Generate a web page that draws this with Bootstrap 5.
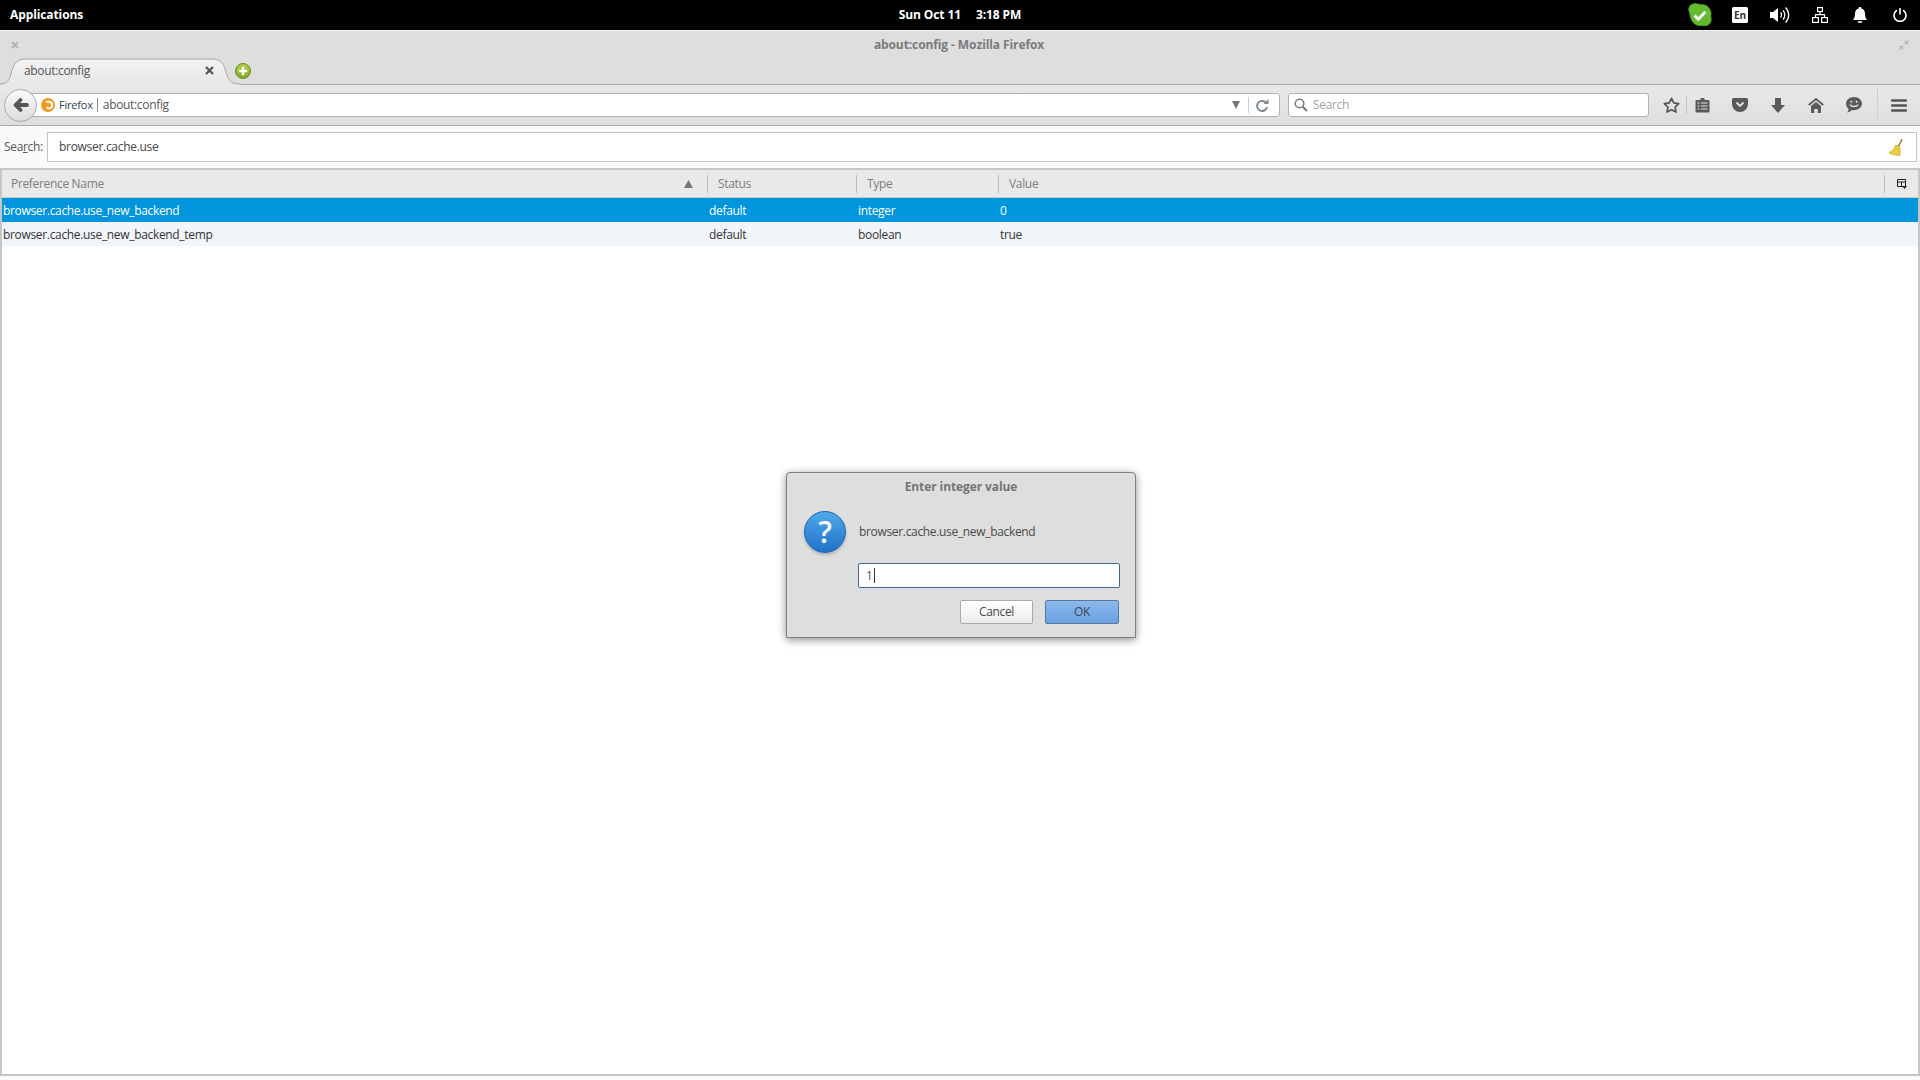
<!DOCTYPE html>
<html lang="en">
<head>
<meta charset="utf-8">
<title>about:config - Mozilla Firefox</title>
<link rel="stylesheet" href="https://cdn.jsdelivr.net/npm/bootstrap@5.3.0/dist/css/bootstrap.min.css">
<style>
html,body{height:100%;overflow:hidden}
body{font-family:"Open Sans","Noto Sans",sans-serif;font-size:12px;letter-spacing:-.33px;color:#3b3b3b;background:#fafafa;width:1920px;height:1080px;position:relative}
.shell{width:1920px;height:1080px}
.panel{height:30px;background:#000;color:#fff;font-weight:700;font-size:12px;letter-spacing:-.1px}
.panel-left{padding-left:10px;width:400px}
.panel-clock{gap:15px}
.panel-tray{width:400px}
.tray-slot{width:40px;height:30px}
.whiteline{height:1px;background:#f4f4f4}
.titlebar{height:54px;background:#dedede;position:relative;border-bottom:1px solid #a6a6a6}
.title-row{height:25px;padding:2px 11px 0}
.win-title{font-weight:700;color:#7b7b7b;font-size:12px;letter-spacing:-.1px}
.tab-row{height:28px;position:relative;padding-left:24px}
.tab-shape{position:absolute;left:0;top:0;width:240px;height:29px}
.tab-label{position:relative;width:175px;color:#555;font-size:12px;height:27px;line-height:27px}
.tab-close{position:relative;width:20px}
.tab-new{position:relative;margin-left:16px;margin-top:1px}
.toolbar{height:41px;background:linear-gradient(#e9e9e9,#dedede);border-bottom:1px solid #ababab;padding-left:4px;position:relative}
.backbtn{width:33px;height:33px;border-radius:50%;background:linear-gradient(#fbfbfb,#dcdcdc);border:1px solid #a9a9a9;position:relative;z-index:2;flex:none}
.urlbar{height:24px;width:1250px;margin-left:-7px;background:#fff;border:1px solid #b2b2b2;border-radius:0 3px 3px 0;padding-left:10px;flex:none;position:relative;z-index:1;color:#555}
.url-site{color:#2f3d4d;font-size:11px;margin-left:4px;padding-right:4px;border-right:1px solid #8c8c8c;line-height:14px;letter-spacing:-.2px}
.url-path{margin-left:5px;font-size:12px}
.url-tail{width:47px;height:22px;margin-left:auto}
.url-sep{width:1px;height:16px;background:#cfcfcf;margin:0 7px 0 8px}
.searchbar{width:361px;height:24px;margin-left:8px;background:#fff;border:1px solid #b2b2b2;border-radius:3px;padding-left:5px;color:#9ba3ad;font-size:12px;flex:none;gap:5px}
.tools{flex:1;position:relative}
.tool-sep{width:1px;height:18px;background:#c2c2c2}
.tool-sep2{width:1px;height:34px;background:#cfcfcf}
.tool-cell-a{width:37px;padding-left:7px}
.tool-cell-b{width:34px;padding-right:4px}
.tool-cell{width:38px}
.tool-sep-last{margin-left:4px}
.filter{height:42px;background:#fafafa;padding:6px 3px 0 4px;gap:5px}
.filter-label{width:38px;height:30px;line-height:30px;color:#555;font-size:12px}
.filter-input{flex:1;height:30px;background:#fff;border:1px solid #c4c4c4;padding:0 13px 0 11px;font-size:12px;letter-spacing:-.3px;color:#444}
.tree{height:908px;border:2px solid #c6c6c6;background:#fff}
.tree-head{height:28px;background:#e9e9e9;border-bottom:1px solid #c8c8c8;color:#7d7d7d;font-size:12px;display:grid;grid-template-columns:705px 149px 142px 886px 34px;align-items:center}
.th{height:18px;line-height:18px;padding-left:10px;border-left:1px solid #bdbdbd;position:relative}
.th:first-child{border-left:0;padding-left:9px}
.sort-arrow{position:absolute;right:14px;top:5px}
.tree-row{height:24px;display:grid;grid-template-columns:705px 149px 142px 1fr;align-items:center;font-size:12px;color:#333;padding-top:1px}
.tree-row>div{padding-left:2px}
.tree-row>div:first-child{padding-left:1px}
.tree-row.sel{background:#0095dd;color:#fff}
.tree-row.alt{background:#f2f5fa}
.dlg{position:absolute;left:786px;top:472px;width:350px;height:166px;background:#dedede;border:1px solid #7f7f7f;border-radius:4px 4px 0 0;box-shadow:0 2px 8px rgba(0,0,0,.45);padding:0 16px}
.dlg-title{height:26px;line-height:27px;text-align:center;font-weight:700;color:#757575;font-size:12px;letter-spacing:-.1px}
.dlg-body{gap:11px;margin-top:10px}
.dlg-icon{width:42px;height:42px;margin:2px 1px 0;border-radius:50%;background:linear-gradient(#4fa8ea,#2272c9);border:1px solid #1a66b5;color:#fff;font-size:30px;font-weight:600;line-height:1;box-shadow:0 2px 3px rgba(0,0,0,.2)}
.dlg-main{flex:1}
.dlg-msg{height:24px;line-height:24px;color:#4a4a4a;margin-top:11px;padding-left:1px}
.dlg-input{height:25px;border:1px solid #3f6a9c;border-radius:2px;background:#fff;margin-top:19px;padding-left:7px;line-height:23px;color:#555;width:262px}
.caret-bar{display:inline-block;width:1px;height:15px;background:#333;vertical-align:-3px;margin-left:1px}
.dlg-actions{gap:12px;margin-top:12px;padding-right:1px}
.dbtn{height:24px;font-size:12px;line-height:22px;border-radius:2px;text-align:center;color:#4a4a4a}
.dbtn-cancel{width:73px;background:linear-gradient(#fff,#ececec);border:1px solid #a9a9a9}
.dbtn-ok{width:74px;background:linear-gradient(#8cb8ec,#6aa2e2);border:1px solid #56789f;color:#3a4654}
</style>
</head>
<body>
<div class="shell d-flex flex-column">
  <div class="panel d-flex align-items-center justify-content-between">
    <div class="panel-left">Applications</div>
    <div class="panel-clock d-flex"><span>Sun Oct 11</span><span>3:18 PM</span></div>
    <div class="panel-tray d-flex justify-content-end">
      <div class="tray-slot d-flex align-items-center justify-content-center">
        <svg width="24" height="24" viewBox="0 0 24 24"><path d="M5 1c3-1.300 5 .5 7.500.5C16 1.500 19 2 21 5s2.500 5 1.800 7.500c.4 2.800 1 5.500-1 8-2 2.400-5 2.700-7.300 2-3 .4-5.500 0-8-1.800C4 18.500 2.700 16 2.300 13 2 10 .3 8 .8 5.500 1.200 3 3 1.500 5 1z" fill="#62bb2e" stroke="#4c9a20" stroke-width=".8"/><path d="M6.500 12.500l3.800 3.800 7.200-7.500" fill="none" stroke="#fff" stroke-width="2.800"/></svg>
      </div>
      <div class="tray-slot d-flex align-items-center justify-content-center">
        <svg width="16" height="16" viewBox="0 0 16 16"><rect width="16" height="16" rx="1.500" fill="#fff"/><text x="8" y="12" text-anchor="middle" font-family="Open Sans" font-size="10" fill="#333">En</text></svg>
      </div>
      <div class="tray-slot d-flex align-items-center justify-content-center">
        <svg width="20" height="18" viewBox="0 0 20 18"><path d="M0 6h3l5-4v14l-5-4H0z" fill="#fff"/><path d="M10.500 6.500a3.500 3.500 0 0 1 0 5M13 4.500a6.500 6.500 0 0 1 0 9M15.500 1.500a10.500 10.500 0 0 1 0 15" fill="none" stroke="#fff" stroke-width="1.300"/></svg>
      </div>
      <div class="tray-slot d-flex align-items-center justify-content-center">
        <svg width="16" height="16" viewBox="0 0 16 16" fill="none" stroke="#fff" stroke-width="1.200"><rect x="5.600" y=".6" width="4.800" height="4"/><rect x=".6" y="10.600" width="5.800" height="4.800"/><rect x="9.600" y="10.600" width="5.800" height="4.800"/><path d="M8 4.600v3M3.500 10.600V7.600h9v3"/></svg>
      </div>
      <div class="tray-slot d-flex align-items-center justify-content-center">
        <svg width="14" height="16" viewBox="0 0 14 16"><path d="M7 0c1 0 1.400.7 1.500 1.500C11 2.200 12 4.300 12 7c0 3 .8 4.500 2 6H0c1.200-1.500 2-3 2-6 0-2.700 1-4.800 3.500-5.500C5.600.7 6 0 7 0z" fill="#fff"/><path d="M4.500 14.300h5a2.500 1.700 0 0 1-5 0z" fill="#fff"/></svg>
      </div>
      <div class="tray-slot d-flex align-items-center justify-content-center">
        <svg width="14" height="14" viewBox="0 0 14 14" fill="none" stroke="#fff" stroke-width="1.600"><path d="M4 2.200a6 6 0 1 0 6 0"/><path d="M7 0v6.500"/></svg>
      </div>
    </div>
  </div>
  <div class="whiteline"></div>
  <div class="titlebar">
    <div class="title-row d-flex align-items-center justify-content-between">
      <svg width="8" height="8" viewBox="0 0 8 8"><path d="M1 1l6 6M7 1l-6 6" stroke="#b4b4b4" stroke-width="2"/></svg>
      <span class="win-title">about:config - Mozilla Firefox</span>
      <svg width="10" height="10" viewBox="0 0 10 10"><path d="M6 0v4h4zM4 10V6H0z" fill="#b0b0b0"/><path d="M5.500 4.500L10 0M4.500 5.500L0 10" stroke="#b0b0b0"/></svg>
    </div>
    <div class="tab-row d-flex align-items-center">
      <svg class="tab-shape" viewBox="0 0 240 29"><defs><linearGradient id="tabfill" x1="0" y1="0" x2="0" y2="1"><stop offset="0" stop-color="#f3f3f3"/><stop offset="1" stop-color="#e7e7e7"/></linearGradient></defs><path d="M0 28c7 0 9-3 11-10 2-9 5-15 15-15h186c9 0 12 5 14 13 2 8 5 12 14 12v1H0z" fill="url(#tabfill)"/><path d="M0 28c7 0 9-3 11-10 2-9 5-15 15-15h186c9 0 12 5 14 13 2 8 5 12 14 12" fill="none" stroke="#a6a6a6"/></svg>
      <div class="tab-label">about:config</div>
      <div class="tab-close d-flex justify-content-center"><svg width="9" height="9" viewBox="0 0 9 9"><path d="M1 1l7 7M8 1l-7 7" stroke="#555" stroke-width="2.200"/></svg></div>
      <svg class="tab-new" width="16" height="16" viewBox="0 0 16 16"><defs><linearGradient id="newfill" x1="0" y1="0" x2="0" y2="1"><stop offset="0" stop-color="#b5d34a"/><stop offset="1" stop-color="#7ea524"/></linearGradient></defs><circle cx="8" cy="8" r="7.500" fill="url(#newfill)" stroke="#688a1c"/><path d="M8 3.800v8.400M3.800 8h8.400" stroke="#fff" stroke-width="2.600"/></svg>
    </div>
  </div>
  <div class="toolbar d-flex align-items-center">
    <div class="backbtn d-flex align-items-center justify-content-center">
      <svg width="16" height="14" viewBox="0 0 16 14"><path d="M7.500 2L2.500 7l5 5M3.500 7h10.500" fill="none" stroke="#565656" stroke-width="3.800" stroke-linecap="round" stroke-linejoin="round"/></svg>
    </div>
    <div class="urlbar d-flex align-items-center">
      <svg width="14" height="14" viewBox="0 0 14 14"><circle cx="7" cy="7" r="7" fill="#f39a1c"/><path d="M4.800 3.800H8a3.300 3.300 0 0 1 .6 6.500 3 3 0 0 1-3-1.100" fill="none" stroke="#fff" stroke-width="1.900"/></svg>
      <span class="url-site">Firefox</span>
      <span class="url-path">about:config</span>
      <div class="url-tail d-flex align-items-center">
        <svg width="8" height="8" viewBox="0 0 8 8"><path d="M0 0h8L4 8z" fill="#777"/></svg>
        <div class="url-sep"></div>
        <svg width="13" height="13" viewBox="0 0 13 13"><path d="M10.500 4.500A5 5 0 1 0 11 8" fill="none" stroke="#7d8a96" stroke-width="2"/><path d="M7.500 5h5V0z" fill="#7d8a96"/></svg>
      </div>
    </div>
    <div class="searchbar d-flex align-items-center">
      <svg width="14" height="14" viewBox="0 0 14 14"><circle cx="5.500" cy="5.500" r="4.300" fill="none" stroke="#7a7a7a" stroke-width="1.500"/><path d="M8.700 8.700L13 13" stroke="#7a7a7a" stroke-width="2"/></svg>
      <span>Search</span>
    </div>
    <div class="tools d-flex align-items-center">
      <div class="d-flex justify-content-center tool-cell-a"><svg width="17" height="16" viewBox="0 0 17 16"><path d="M8.500 1.300l2.200 4.600 5 .7-3.600 3.500.9 5-4.500-2.400-4.500 2.400.9-5L1.300 6.600l5-.7z" fill="none" stroke="#555" stroke-width="1.700" stroke-linejoin="round"/></svg></div>
      <div class="tool-sep"></div>
      <div class="d-flex justify-content-center tool-cell-b"><svg width="15" height="16" viewBox="0 0 15 16"><path d="M1.500 3h3.500l1-2h3l1 2h3.500a1 1 0 0 1 1 1v10.500a1 1 0 0 1-1 1h-12a1 1 0 0 1-1-1V4a1 1 0 0 1 1-1z" fill="#5a5a5a"/><path d="M2.500 6h2M6 6h6.500M2.500 9h2M6 9h6.500M2.500 12h2M6 12h6.500" stroke="#e6e6e6" stroke-width="1.200"/></svg></div>
      <div class="d-flex justify-content-center tool-cell"><svg width="16" height="14" viewBox="0 0 16 14"><path d="M1.500 0h13A1.500 1.500 0 0 1 16 1.500V6a8 8 0 0 1-16 0V1.500A1.500 1.500 0 0 1 1.500 0z" fill="#5a5a5a"/><path d="M4.500 4.500L8 8l3.500-3.500" fill="none" stroke="#e6e6e6" stroke-width="1.800"/></svg></div>
      <div class="d-flex justify-content-center tool-cell"><svg width="14" height="15" viewBox="0 0 14 15"><path d="M4 0h6v7h4l-7 8-7-8h4z" fill="#5a5a5a"/></svg></div>
      <div class="d-flex justify-content-center tool-cell"><svg width="16" height="15" viewBox="0 0 16 15"><path d="M.7 7L8 1l7.300 6" fill="none" stroke="#5a5a5a" stroke-width="1.800"/><path d="M8 4l5 4v7H9.800v-4H6.200v4H3V8z" fill="#5a5a5a"/></svg></div>
      <div class="d-flex justify-content-center tool-cell"><svg width="16" height="16" viewBox="0 0 16 16"><path d="M8 0c4.400 0 8 2.900 8 6.600s-3.600 6.600-8 6.600c-.8 0-1.500-.1-2.200-.3C4.500 14.300 2.800 15.300 1 15.500c1-1 1.500-2.100 1.600-3.500C1 10.800 0 8.800 0 6.600 0 2.900 3.600 0 8 0z" fill="#5a5a5a"/><circle cx="5.300" cy="4.800" r="1" fill="#e6e6e6"/><circle cx="10.700" cy="4.800" r="1" fill="#e6e6e6"/><path d="M4 7.500c1 2.600 7 2.600 8 0" fill="none" stroke="#e6e6e6" stroke-width="1.200"/></svg></div>
      <div class="tool-sep2 tool-sep-last"></div>
      <div class="d-flex justify-content-center flex-fill"><svg width="16" height="13" viewBox="0 0 16 13"><path d="M1 1.500h14M1 6.500h14M1 11.500h14" stroke="#555" stroke-width="2.400" stroke-linecap="round"/></svg></div>
    </div>
  </div>
  <div class="filter d-flex align-items-start">
    <div class="filter-label">Sea<u>r</u>ch:</div>
    <div class="filter-input d-flex align-items-center justify-content-between">
      <span>browser.cache.use</span>
      <svg width="14" height="17" viewBox="0 0 14 17"><path d="M12.500 0l1.300.6L10 7.500 8.800 7z" fill="#9a6a2c"/><path d="M6.800 5.800l4 2c.5 3 .5 6 .2 8.500-1 .5-2 .2-3-.3l-1 .5-1-.8-1.500.3-1-.8-1.500 0L0 13.500c3-1 5-3.500 6.800-7.700z" fill="#e9cf3c" stroke="#b99b22" stroke-width=".5"/></svg>
    </div>
  </div>
  <div class="tree flex-shrink-0">
    <div class="tree-head">
      <div class="th">Preference Name
        <svg class="sort-arrow" width="9" height="8" viewBox="0 0 9 8"><path d="M4.500 0L9 8H0z" fill="#777"/></svg>
      </div>
      <div class="th">Status</div>
      <div class="th">Type</div>
      <div class="th">Value</div>
      <div class="th d-flex align-items-center justify-content-center ps-0"><svg width="10" height="10" viewBox="0 0 10 10"><path d="M.5.500h8v7h-8zM.5 3h8M4.500 3v4.500" fill="none" stroke="#222"/><path d="M5 7h5L7.500 10z" fill="#222"/></svg></div>
    </div>
    <div class="tree-row sel"><div>browser.cache.use_new_backend</div><div>default</div><div>integer</div><div>0</div></div>
    <div class="tree-row alt"><div>browser.cache.use_new_backend_temp</div><div>default</div><div>boolean</div><div>true</div></div>
  </div>
</div>
<div class="dlg" role="dialog">
  <div class="dlg-title">Enter integer value</div>
  <div class="dlg-body d-flex">
    <div class="dlg-icon flex-shrink-0 d-flex align-items-center justify-content-center">?</div>
    <div class="dlg-main">
      <div class="dlg-msg">browser.cache.use_new_backend</div>
      <div class="dlg-input">1<span class="caret-bar"></span></div>
      <div class="dlg-actions d-flex justify-content-end">
        <div class="dbtn dbtn-cancel">Cancel</div>
        <div class="dbtn dbtn-ok">OK</div>
      </div>
    </div>
  </div>
</div>
</body>
</html>
